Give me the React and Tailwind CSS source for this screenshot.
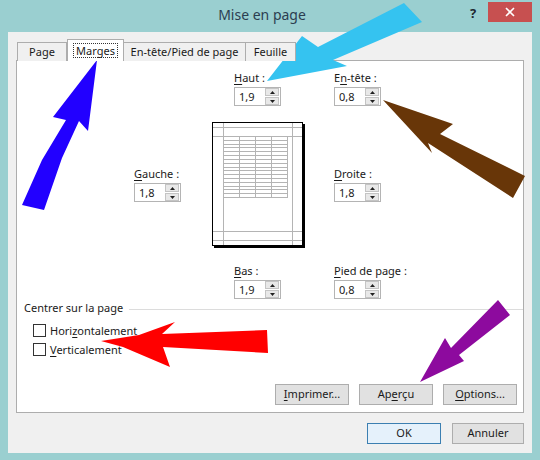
import React from "react";

function Spinner() {
  return (
    <div className="w-[14px] h-[17px] flex flex-col gap-[1px] mr-[1px]">
      <div className="flex-1 bg-[#e8e8e8] border border-[#c4c4c4] flex items-center justify-center">
        <svg width="5" height="3" viewBox="0 0 5 3"><path d="M0 3 L2.5 0 L5 3 Z" fill="#202020" /></svg>
      </div>
      <div className="flex-1 bg-[#e8e8e8] border border-[#c4c4c4] flex items-center justify-center">
        <svg width="5" height="3" viewBox="0 0 5 3"><path d="M0 0 L5 0 L2.5 3 Z" fill="#202020" /></svg>
      </div>
    </div>
  );
}

function SpinField({ before, u, after, value, className = "" }) {
  return (
    <div className={"flex flex-col " + className}>
      <span className="h-[16px] leading-[16px]">
        {before}
        <span className="underline underline-offset-2">{u}</span>
        {after}
      </span>
      <div className="mt-[1px] w-[47px] h-[19px] border border-[#b4b4b4] bg-white flex items-center">
        <span className="flex-1 pl-[4px] leading-[16px]">{value}</span>
        <Spinner />
      </div>
    </div>
  );
}

function PagePreview() {
  const rows = Array.from({ length: 15 }, (_, i) => 14 + ((i + 1) * 61) / 16);
  return (
    <svg width="93" height="126" viewBox="0 0 93 126">
      <rect x="2" y="2" width="91" height="124" fill="#000" />
      <rect x="0.5" y="0.5" width="90" height="123" fill="#fff" stroke="#000" />
      <g stroke="#b4b4b4" strokeWidth="1" shapeRendering="crispEdges">
        <line x1="11.5" y1="1" x2="11.5" y2="123" />
        <line x1="80.5" y1="1" x2="80.5" y2="123" />
        <line x1="1" y1="5.5" x2="90" y2="5.5" />
        <line x1="1" y1="14.5" x2="90" y2="14.5" />
        <line x1="1" y1="109.5" x2="90" y2="109.5" />
        <line x1="1" y1="118.5" x2="90" y2="118.5" />
        <line x1="27.5" y1="14" x2="27.5" y2="75" />
        <line x1="43.5" y1="14" x2="43.5" y2="75" />
        <line x1="59.5" y1="14" x2="59.5" y2="75" />
        <line x1="75.5" y1="14" x2="75.5" y2="75" />
        <line x1="11" y1="75.5" x2="76" y2="75.5" />
        {rows.map((y, i) => (
          <line key={i} x1="11" y1={Math.round(y) + 0.5} x2="76" y2={Math.round(y) + 0.5} />
        ))}
      </g>
    </svg>
  );
}

function Check({ before, u, after }) {
  return (
    <div className="h-[19px] flex items-center">
      <div className="w-[13px] h-[13px] border border-[#333] bg-white" />
      <span className="ml-[4px] leading-[16px]">
        {before}
        <span className="underline underline-offset-2">{u}</span>
        {after}
      </span>
    </div>
  );
}

function Btn({ children, w = "w-[74px]", primary }) {
  return (
    <div
      className={
        w +
        " h-[21px] flex items-center justify-center bg-[#e1e1e1] border " +
        (primary ? "border-[#3c7fb1] bg-[#e5f1fb]" : "border-[#adadad]")
      }
    >
      {children}
    </div>
  );
}

export default function App() {
  return (
    <div
      className="relative w-[540px] h-[460px] bg-[#9acfd0] flex flex-col text-[11px] text-[#1a1a1a] overflow-hidden"
      style={{ fontFamily: '"Noto Sans", "Open Sans", sans-serif' }}
    >
      {/* TITLE BAR */}
      <div className="h-[32px] flex items-start shrink-0">
        <div className="ml-[62px] w-[400px] mt-[5px] text-center text-[14px] leading-[20px] text-[#2c3e50]">
          Mise en page
        </div>
        <div className="ml-[3px] w-[16px] mt-[4px] text-center font-bold text-[13px] leading-[18px] text-[#202830]">?</div>
        <div className="ml-[7px] mt-[2px] w-[44px] h-[20px] bg-[#c75050] flex items-center justify-center">
          <svg width="10" height="10" viewBox="0 0 10 10">
            <path d="M1 1 L9 9 M9 1 L1 9" stroke="#fff" strokeWidth="1.6" />
          </svg>
        </div>
      </div>

      {/* CLIENT AREA */}
      <div className="ml-[8px] w-[524px] h-[421px] bg-[#f0f0f0] flex flex-col">
        {/* TABS */}
        <div className="mt-[7px] ml-[9px] flex items-end h-[22px] relative z-10 -mb-[1px]">
          <div className="w-[50px] h-[19px] border border-b-0 border-[#adadad] bg-[#f0f0f0] flex items-center justify-center">Page</div>
          <div className="w-[57px] h-[22px] border border-b-0 border-[#adadad] bg-white flex items-center justify-center">
            <span className="border border-dotted border-[#333] px-[2px] leading-[13px] h-[15px]">Marges</span>
          </div>
          <div className="w-[122px] h-[19px] border border-b-0 border-l-0 border-[#adadad] bg-[#f0f0f0] flex items-center justify-center">
            En-tête/Pied de page
          </div>
          <div className="w-[50px] h-[19px] border border-b-0 border-l-0 border-[#adadad] bg-[#f0f0f0] flex items-center justify-center">
            Feuille
          </div>
        </div>

        {/* PANEL */}
        <div className="ml-[8px] w-[508px] h-[353px] bg-white border border-[#adadad] flex flex-col">
          <div className="mt-[9px] ml-[217px] flex">
            <SpinField before="" u="H" after="aut :" value="1,9" className="w-[100px]" />
            <SpinField before="E" u="n" after="-tête :" value="0,8" />
          </div>

          <div className="mt-[16px] flex items-start">
            <SpinField before="" u="G" after="auche :" value="1,8" className="ml-[117px] w-[78px] mt-[44px]" />
            <PagePreview />
            <SpinField before="" u="D" after="roite :" value="1,8" className="ml-[29px] mt-[44px]" />
          </div>

          <div className="mt-[15px] ml-[217px] flex">
            <SpinField before="" u="B" after="as :" value="1,9" className="w-[100px]" />
            <SpinField before="" u="P" after="ied de page :" value="0,8" />
          </div>

          <div className="mt-[1px] ml-[7px] flex items-center h-[16px]">
            <span className="leading-[16px]">Centrer sur la page</span>
            <div className="ml-[6px] flex-1 h-px bg-[#dcdcdc] mt-[2px]" />
          </div>
          <div className="mt-[5px] ml-[16px] flex flex-col">
            <Check before="Hori" u="z" after="ontalement" />
            <Check before="" u="V" after="erticalement" />
          </div>

          <div className="mt-[25px] flex justify-end gap-[10px] mr-[6px]">
            <Btn>
              <span><span className="underline underline-offset-2">I</span>mprimer...</span>
            </Btn>
            <Btn>
              <span>Ap<span className="underline underline-offset-2">e</span>rçu</span>
            </Btn>
            <Btn>
              <span><span className="underline underline-offset-2">O</span>ptions...</span>
            </Btn>
          </div>
        </div>

        {/* DIALOG BUTTONS */}
        <div className="mt-[10px] flex justify-end gap-[11px] mr-[8px]">
          <Btn primary>OK</Btn>
          <Btn w="w-[72px]">Annuler</Btn>
        </div>
      </div>

      {/* ANNOTATION ARROWS */}
      <svg className="absolute inset-0 pointer-events-none" width="540" height="460" viewBox="0 0 540 460">
        <polygon fill="#35c3f0" points="267,81 302,36 318,47 404,3 422,22 333,60 347,66" />
        <polygon fill="#2200ff" points="97,60 88,131 79,121 62,158 44,210 22,205 42,160 66,120 53,117" />
        <polygon fill="#683608" points="383,100 453,124 440,134 525,176 513,198 428,143 432,153" />
        <polygon fill="#ff0000" points="101,341 139,335 175,322 162,334 267,330 268,353 163,347 170,367 123,347" />
        <polygon fill="#8d0a9e" points="420,382 445,338 451,348 498,300 510,315 459,355 464,361" />
      </svg>
    </div>
  );
}
